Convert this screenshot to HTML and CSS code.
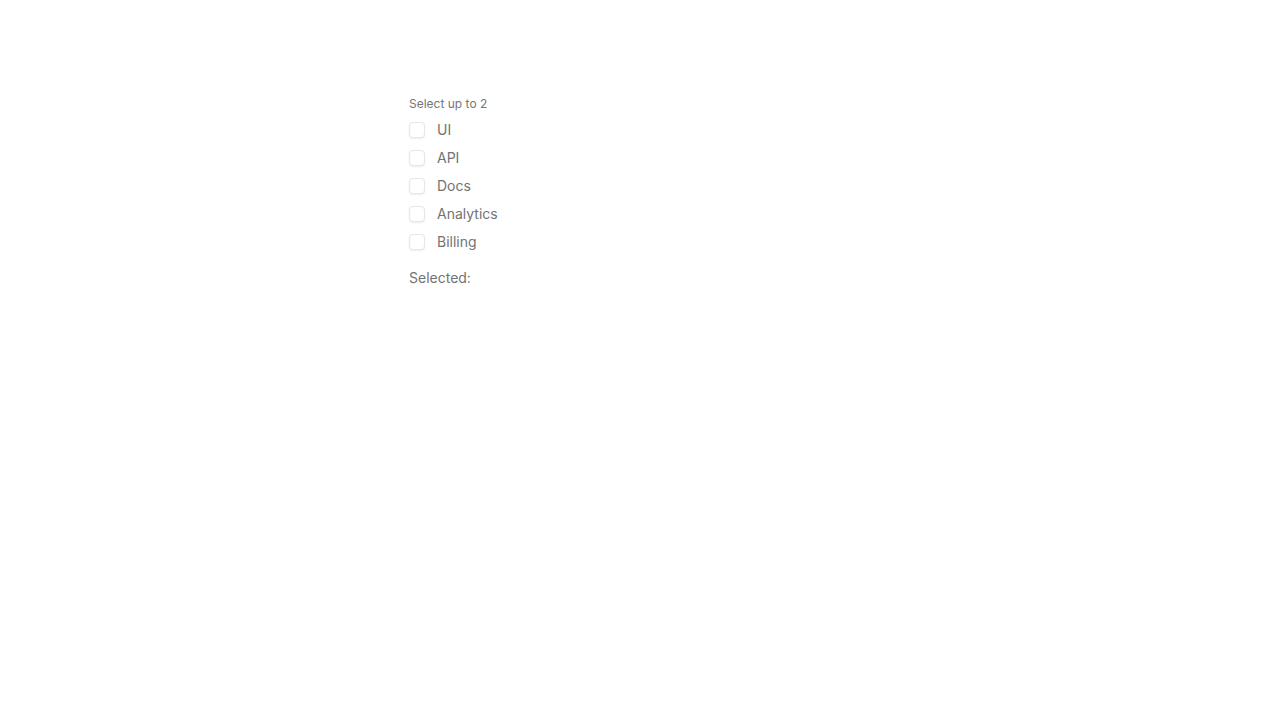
FILE: index.html
```html
<!DOCTYPE html>
<html>
<head>
<meta charset="utf-8">
<link rel="stylesheet" href="styles.css">
</head>
<body>
<div class="page">
  <div class="group">
    <div class="legend">Select up to 2</div>
    <div class="list">
      <label class="item"><span class="box"></span><span class="text">UI</span></label>
      <label class="item"><span class="box"></span><span class="text">API</span></label>
      <label class="item"><span class="box"></span><span class="text">Docs</span></label>
      <label class="item"><span class="box"></span><span class="text">Analytics</span></label>
      <label class="item"><span class="box"></span><span class="text">Billing</span></label>
    </div>
    <div class="selected">Selected: </div>
  </div>
</div>
</body>
</html>
```
FILE: styles.css
```css
html, body { margin: 0; padding: 0; background: #fff; }
body { font-family: Inter, "Noto Sans", sans-serif; color: #737373; }
.page { padding: 96px 0 0 409px; }
.group { display: flex; flex-direction: column; }
.legend { font-size: 12px; line-height: 16px; color: #767676; }
.list { display: flex; flex-direction: column; gap: 8px; margin-top: 8px; }
.item { display: flex; align-items: center; gap: 12px; height: 20px; font-size: 14px; line-height: 20px; }
.box { width: 14px; height: 14px; border: 1px solid #e6e6ea; border-radius: 4px; background: #fff; box-shadow: 0 1px 2px rgba(0,0,0,0.07); }
.text { color: #737373; }
.selected { margin-top: 16px; font-size: 14px; line-height: 20px; color: #737373; }
```
